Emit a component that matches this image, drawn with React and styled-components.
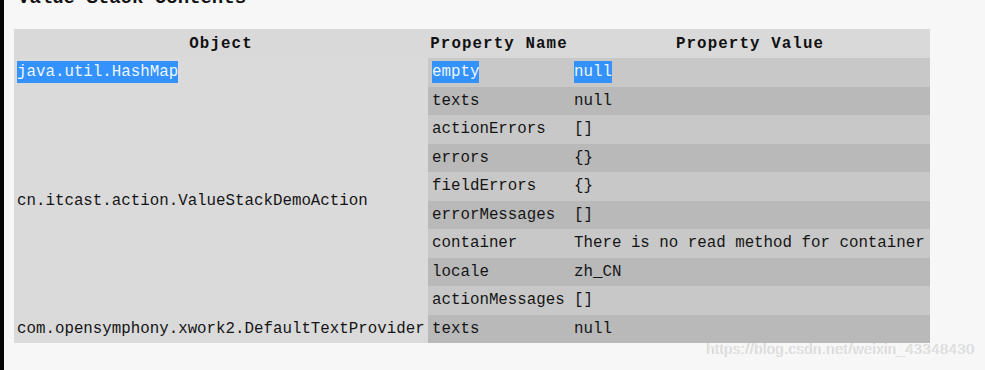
import React from "react";
import styled, { createGlobalStyle } from "styled-components";

const GlobalStyle = createGlobalStyle`
  html, body {
    margin: 0;
    padding: 0;
    background: #f7f7f7;
    overflow: hidden;
  }
`;

const stack = [
  {
    object: "java.util.HashMap",
    props: [{ name: "empty", value: "null", selected: true }],
  },
  {
    object: "cn.itcast.action.ValueStackDemoAction",
    props: [
      { name: "texts", value: "null" },
      { name: "actionErrors", value: "[]" },
      { name: "errors", value: "{}" },
      { name: "fieldErrors", value: "{}" },
      { name: "errorMessages", value: "[]" },
      { name: "container", value: "There is no read method for container" },
      { name: "locale", value: "zh_CN" },
      { name: "actionMessages", value: "[]" },
    ],
  },
  {
    object: "com.opensymphony.xwork2.DefaultTextProvider",
    props: [{ name: "texts", value: "null" }],
  },
];

function ValueStack() {
  let rowIndex = 0;
  const rows = [];
  stack.forEach((entry) => {
    entry.props.forEach((prop, i) => {
      const odd = rowIndex % 2 === 0;
      rows.push(
        <tr key={rowIndex}>
          {i === 0 && (
            <ObjectCell rowSpan={entry.props.length}>
              {prop.selected ? <Selected>{entry.object}</Selected> : entry.object}
            </ObjectCell>
          )}
          <PropCell $odd={odd}>
            {prop.selected ? <Selected>{prop.name}</Selected> : prop.name}
          </PropCell>
          <PropCell $odd={odd}>
            {prop.selected ? <Selected>{prop.value}</Selected> : prop.value}
          </PropCell>
        </tr>
      );
      rowIndex++;
    });
  });

  return (
    <Page>
      <Title>Value Stack Contents</Title>
      <Table>
        <thead>
          <tr>
            <HeadCell style={{ width: 414 }}>Object</HeadCell>
            <HeadCell style={{ width: 142 }}>Property Name</HeadCell>
            <HeadCell>Property Value</HeadCell>
          </tr>
        </thead>
        <tbody>{rows}</tbody>
      </Table>
      <Watermark>https://blog.csdn.net/weixin_43348430</Watermark>
    </Page>
  );
}

export default function App() {
  return (
    <>
      <GlobalStyle />
      <ValueStack />
    </>
  );
}

const Page = styled.div`
  position: relative;
  display: flow-root;
  height: 370px;
  overflow: hidden;
  box-sizing: border-box;
  border-left: 4px solid #050505;
  padding-left: 10px;
  font-family: "Liberation Mono", "DejaVu Sans Mono", monospace;
  font-size: 15.8px;
  color: #151515;
`;

const Title = styled.h3`
  margin: -12px 0 21px 4px;
  font-size: 19px;
  line-height: 20px;
  font-weight: bold;
  color: #111;
`;

const Table = styled.table`
  border-collapse: collapse;
  border-spacing: 0;
  width: 916px;
  table-layout: fixed;
`;

const HeadCell = styled.th`
  height: 29px;
  padding: 0;
  background: #d9d9d9;
  font-weight: bold;
  letter-spacing: 1.1px;
  text-align: center;
  color: #111;
`;

const ObjectCell = styled.td`
  background: #dadadb;
  padding: 0 0 0 3px;
  height: 28.5px;
  white-space: nowrap;
  vertical-align: middle;
`;

const PropCell = styled.td`
  background: ${(p) => (p.$odd ? "#c8c8c8" : "#b9b9b9")};
  padding: 0 0 0 4px;
  height: 28.5px;
  white-space: nowrap;
  vertical-align: middle;
`;

const Selected = styled.span`
  display: inline-block;
  line-height: 22px;
  background: #3392fd;
  color: #eef6ff;
`;

const Watermark = styled.div`
  position: absolute;
  left: 703px;
  top: 341px;
  font-family: "Liberation Sans", Arial, sans-serif;
  font-size: 14.8px;
  color: #e2e2e2;
  text-shadow: 1px 0 0 #fff, -1px 0 0 #d6d6d6;
  letter-spacing: 0.45px;
  white-space: nowrap;
`;
